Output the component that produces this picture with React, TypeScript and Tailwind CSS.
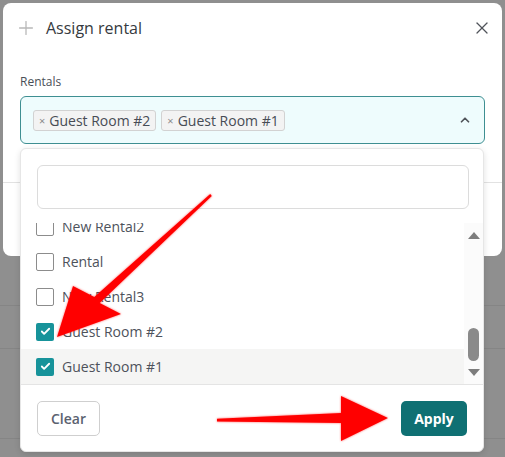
import React from "react";
import { X, Plus, ChevronUp, Check } from "lucide-react";

interface Option {
  label: string;
  checked: boolean;
}

const options: Option[] = [
  { label: "New Rental2", checked: false },
  { label: "Rental", checked: false },
  { label: "New Rental3", checked: false },
  { label: "Guest Room #2", checked: true },
  { label: "Guest Room #1", checked: true },
];

const Chip = ({ label }: { label: string }) => (
  <span className="flex h-[21px] items-center gap-[4px] rounded-[3px] border border-[#d2d2d2] bg-[#f3f3f3] pl-[5px] pr-[5px] text-[14px] text-[#474c55]">
    <span className="text-[11px] leading-none text-[#8a8a8a]">×</span>
    {label}
  </span>
);

const Checkbox = ({ checked }: { checked: boolean }) =>
  checked ? (
    <span className="flex h-[18px] w-[18px] items-center justify-center rounded-[2px] bg-[#17939a]">
      <Check className="h-[11px] w-[11px] text-white" strokeWidth={4} />
    </span>
  ) : (
    <span className="h-[18px] w-[18px] rounded-[2px] border border-[#8c8c8c] bg-white" />
  );

const Arrows = () => (
  <svg
    className="pointer-events-none absolute left-0 top-0 z-50"
    width="505"
    height="457"
    viewBox="0 0 505 457"
    style={{ filter: "drop-shadow(0 0 1px rgba(255,0,0,0.6))" }}
  >
    <polygon
      points="210.2,194.1 211.8,195.9 99.7,302.9 121,314 57,337 73,286 94.3,297.1"
      fill="#ff0000"
    />
    <polygon
      points="217,418.8 341,413 341,396 388,418 341,441 341,423 217,421.4"
      fill="#ff0000"
    />
  </svg>
);

export default function App() {
  return (
    <div
      className="relative h-[457px] w-[505px] overflow-hidden bg-[#8f8f8f] pl-[3px] pt-[3px]"
      style={{ fontFamily: '"Open Sans", "Liberation Sans", sans-serif' }}
    >
      {/* faint rows of the page behind the overlay */}
      <div className="absolute left-0 top-[305px] h-px w-full bg-[#858585]" />
      <div className="absolute left-0 top-[348px] h-px w-full bg-[#858585]" />
      <div className="absolute left-0 top-[438px] h-px w-full bg-[#858585]" />

      <div className="relative flex h-[253px] w-[499px] flex-col rounded-[8px] bg-white">
        <div className="flex h-[50px] items-center pl-[12px] pr-[10px]">
          <Plus className="h-[22px] w-[22px] text-[#b8b8b8]" strokeWidth={1.4} />
          <span className="ml-[9px] text-[16px] text-[#363a40]">Assign rental</span>
          <X className="ml-auto h-[20px] w-[20px] text-[#50545a]" strokeWidth={1.5} />
        </div>

        <div className="px-[17px]">
          <div className="mt-[21px] text-[12px] leading-[16px] text-[#4a4f57]">Rentals</div>
          <div className="mt-[6px] flex h-[48px] items-center gap-[5px] rounded-[6px] border border-[#3e8f92] bg-[#eefcfd] pl-[12px] pr-[12px]">
            <Chip label="Guest Room #2" />
            <Chip label="Guest Room #1" />
            <ChevronUp className="ml-auto h-[14px] w-[14px] text-[#50545a]" strokeWidth={3} />
          </div>
        </div>

        <div className="mt-[38px] h-px w-full bg-[#e2e2e2]" />

        {/* dropdown panel */}
        <div className="absolute left-[17px] top-[145px] z-10 flex h-[304px] w-[464px] flex-col rounded-[6px] border border-[#e6e6e6] bg-white shadow-[0_2px_6px_rgba(0,0,0,0.12)]">
          <div className="px-[16px] pt-[16px]">
            <div className="h-[44px] w-[432px] rounded-[6px] border border-[#dcdcdc] bg-white" />
          </div>

          <div className="mt-[14px] flex h-[161px] overflow-hidden">
            <div className="flex w-[445px] flex-col">
              <div className="-mt-[14px]">
                {options.map((o, i) => (
                  <div
                    key={o.label}
                    className={`flex h-[35px] items-center gap-[8px] pl-[15px] text-[14px] text-[#4d525b] ${
                      i === options.length - 1 ? "bg-[#f5f5f4]" : ""
                    }`}
                  >
                    <Checkbox checked={o.checked} />
                    <span>{o.label}</span>
                  </div>
                ))}
              </div>
            </div>
            <div className="flex w-[19px] flex-col items-center bg-[#fbfbfb] pt-[9px]">
              <div className="h-0 w-0 border-x-[6px] border-b-[7px] border-x-transparent border-b-[#7d7d7d]" />
              <div className="mt-[89px] h-[33px] w-[11px] rounded-full bg-[#8a8a8a]" />
              <div className="mt-[8px] h-0 w-0 border-x-[6px] border-t-[7px] border-x-transparent border-t-[#7d7d7d]" />
            </div>
          </div>

          <div className="h-px w-full bg-[#e4e4e4]" />

          <div className="flex items-center justify-between px-[16px] pt-[16px]">
            <button className="h-[35px] w-[63px] rounded-[5px] border border-[#cfcfcf] bg-white text-[14px] font-semibold text-[#5b6270]">
              Clear
            </button>
            <button className="h-[35px] w-[66px] rounded-[5px] bg-[#0f7073] text-[14px] font-bold text-white">
              Apply
            </button>
          </div>
        </div>
      </div>

      <Arrows />
    </div>
  );
}
